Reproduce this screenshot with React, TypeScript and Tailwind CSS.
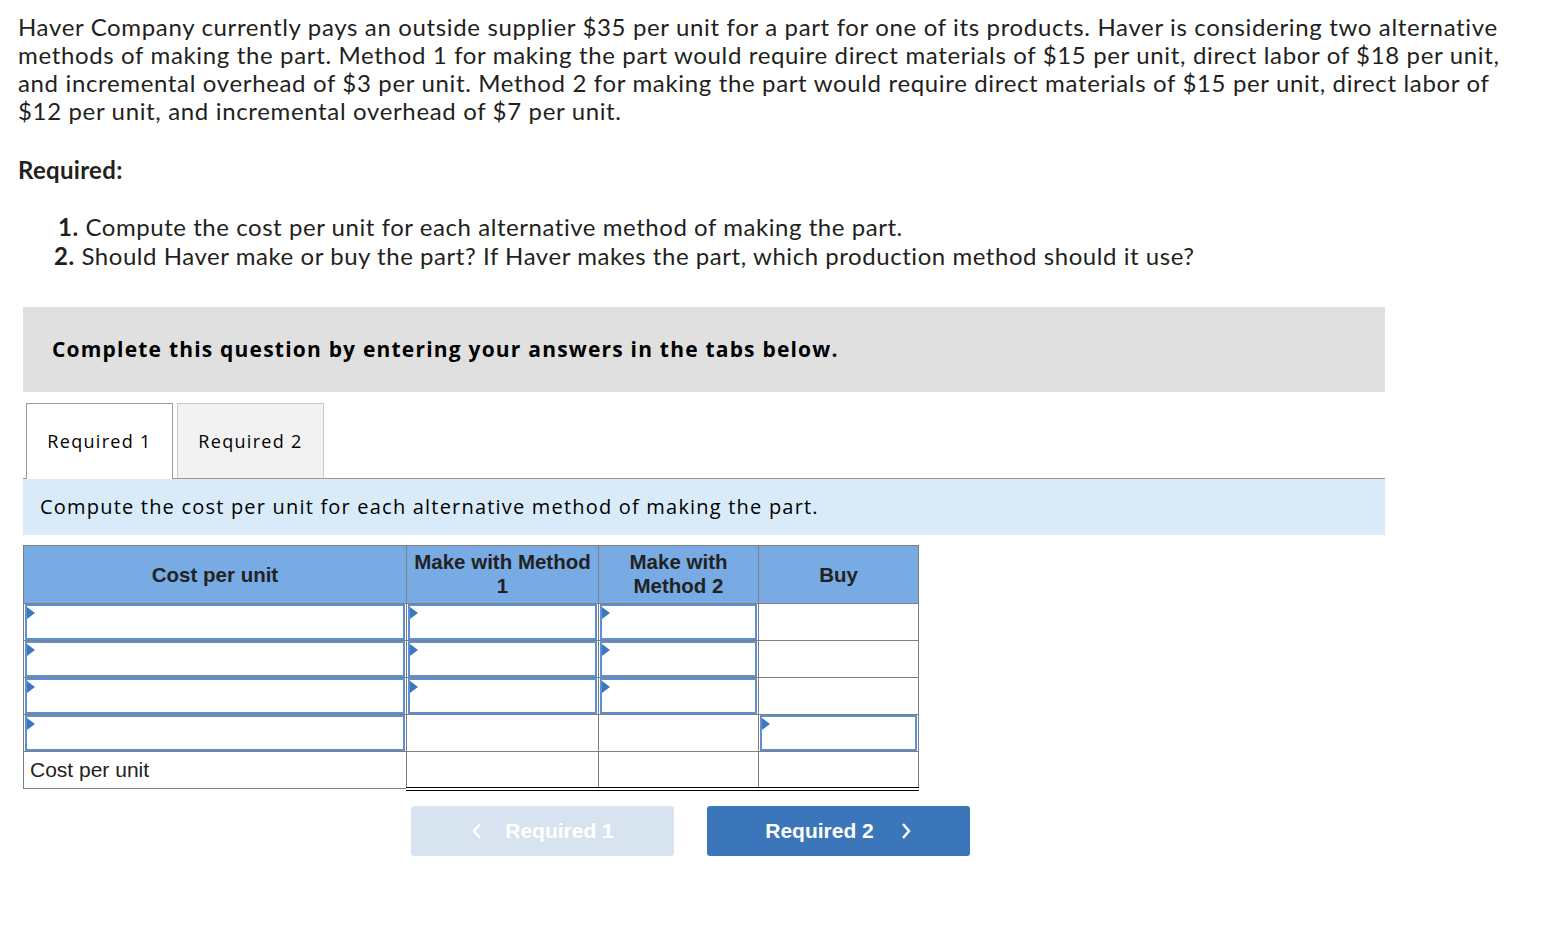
import React from 'react';

const flag = (
  <span className="absolute left-0 top-[1px] w-0 h-0 border-y-[6px] border-y-transparent border-l-[8px] border-l-[#3b78c4]"/>
);

function InputCell({className = ""}: {className?: string}) {
  return (
    <td className={`p-0 h-[37px] border border-[#808080] ${className}`}>
      <div className="relative h-full m-[1px] border-2 border-[#5d8fd1] bg-white">
        {flag}
      </div>
    </td>
  );
}

function App() {
  const rows = [0, 1, 2];
  return (
    <div className="w-[1565px] h-[948px] bg-white text-[#231f20] pl-[18px]" style={{fontFamily: "Lato, sans-serif"}}>
      <p className="pt-[13px] text-[24px] leading-[28px] tracking-[0.65px] w-[1500px]">
        Haver Company currently pays an outside supplier $35 per unit for a part for one of its products. Haver is considering two alternative methods of making the part. Method 1 for making the part would require direct materials of $15 per unit, direct labor of $18 per unit, and incremental overhead of $3 per unit. Method 2 for making the part would require direct materials of $15 per unit, direct labor of $12 per unit, and incremental overhead of $7 per unit.
      </p>
      <p className="mt-[31px] text-[24px] leading-[28px] font-bold tracking-[0.3px]">Required:</p>
      <ol className="mt-[28px] text-[24px] leading-[29px] tracking-[0.55px] pl-[40px]">
        <li><b>1.</b> Compute the cost per unit for each alternative method of making the part.</li>
        <li className="-ml-[4px]"><b>2.</b> Should Haver make or buy the part? If Haver makes the part, which production method should it use?</li>
      </ol>

      <div className="ml-[5px] w-[1362px]" style={{fontFamily: "'Open Sans', sans-serif"}}>
        <div className="mt-[37px] h-[85px] bg-[#e0e0e0] flex items-center pl-[29px] text-[21px] tracking-[1.2px] font-bold text-black">
          Complete this question by entering your answers in the tabs below.
        </div>
        <div className="mt-[12px] flex items-end gap-[4px] pl-[3px] border-b border-[#999] h-[75px]">
          <div className="w-[147px] h-[76px] -mb-px bg-white border border-b-0 border-[#999] flex items-center justify-center text-[18px] tracking-[1.3px] text-black">
            Required 1
          </div>
          <div className="w-[147px] h-[75px] bg-[#f2f2f2] border border-b-0 border-[#c8c8c8] flex items-center justify-center text-[18px] tracking-[1.3px] text-black">
            Required 2
          </div>
        </div>
        <div className="h-[56px] bg-[#d9ebf9] flex items-center pl-[17px] text-[20px] tracking-[1.2px] text-black">
          Compute the cost per unit for each alternative method of making the part.
        </div>
      </div>

      <table className="mt-[10px] ml-[5px] border-collapse text-[#222]" style={{fontFamily: "'Liberation Sans', Arial, sans-serif"}}>
        <thead>
          <tr className="bg-[#78abe3] h-[58px] text-[20.5px] font-bold leading-[24px]">
            <th className="w-[383px] border border-[#808080]">Cost per unit</th>
            <th className="w-[192px] border border-[#808080] px-[5px] align-top pt-[4px]">Make with Method 1</th>
            <th className="w-[160px] border border-[#808080] px-[20px] align-top pt-[4px]">Make with Method 2</th>
            <th className="w-[160px] border border-[#808080]">Buy</th>
          </tr>
        </thead>
        <tbody>
          {rows.map(r => (
            <tr key={r}>
              <InputCell/>
              <InputCell/>
              <InputCell/>
              <td className="h-[37px] border border-[#808080]"/>
            </tr>
          ))}
          <tr>
            <InputCell/>
            <td className="h-[37px] border border-[#808080] border-b-black"/>
            <td className="h-[37px] border border-[#808080] border-b-black"/>
            <InputCell className="border-b-black"/>
          </tr>
          <tr>
            <td className="h-[37px] border border-[#808080] pl-[6px] text-[21px]">Cost per unit</td>
            <td className="h-[37px] border border-[#808080] border-b-[4px] border-b-black border-double"/>
            <td className="h-[37px] border border-[#808080] border-b-[4px] border-b-black border-double"/>
            <td className="h-[37px] border border-[#808080] border-b-[4px] border-b-black border-double"/>
          </tr>
        </tbody>
      </table>

      <div className="mt-[15px] ml-[393px] flex gap-[33px] text-[21px] font-bold text-white" style={{fontFamily: "'Liberation Sans', Arial, sans-serif"}}>
        <button className="w-[263px] h-[50px] rounded-[3px] bg-[#d8e3f0] flex items-center justify-center gap-[22px]">
          <svg width="12" height="18" viewBox="0 0 12 18"><path d="M9 2 L3 9 L9 16" stroke="white" strokeWidth="2.5" fill="none"/></svg>
          Required 1
        </button>
        <button className="w-[263px] h-[50px] rounded-[3px] bg-[#3b76bb] flex items-center justify-center gap-[26px]">
          Required 2
          <svg width="12" height="18" viewBox="0 0 12 18"><path d="M3 2 L9 9 L3 16" stroke="white" strokeWidth="2.5" fill="none"/></svg>
        </button>
      </div>
    </div>
  );
}

export default App;
